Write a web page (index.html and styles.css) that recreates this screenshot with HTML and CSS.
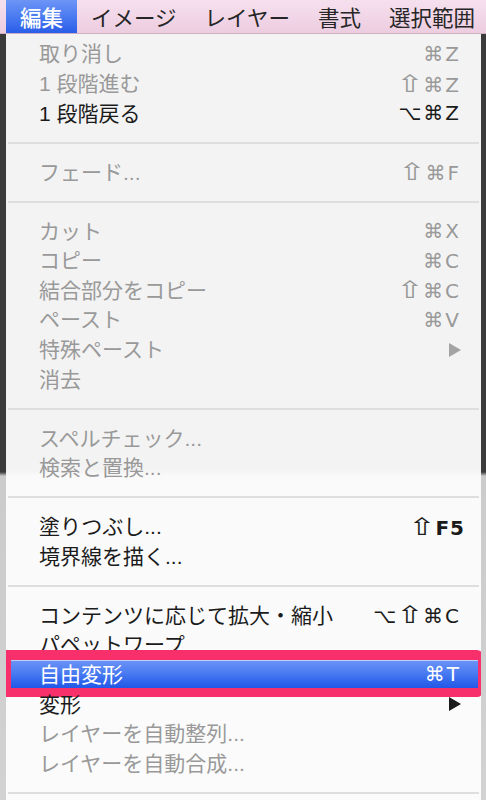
FILE: index.html
```html
<!DOCTYPE html>
<html lang="ja">
<head>
<meta charset="utf-8">
<title>編集メニュー</title>
<link rel="stylesheet" href="styles.css">
</head>
<body>
<div class="screen">
  <nav class="menubar">
    <span class="mb-item active">編集</span>
    <span class="mb-item">イメージ</span>
    <span class="mb-item">レイヤー</span>
    <span class="mb-item">書式</span>
    <span class="mb-item">選択範囲</span>
  </nav>
  <div class="menu">
    <div class="row dis"><span class="label">取り消し</span><span class="key">⌘Z</span></div>
    <div class="row dis"><span class="label">1 段階進む</span><span class="key"><span class="shift">⇧</span>⌘Z</span></div>
    <div class="row"><span class="label">1 段階戻る</span><span class="key">⌥⌘Z</span></div>
    <div class="sep"></div>
    <div class="row dis"><span class="label">フェード...</span><span class="key"><span class="shift">⇧</span>⌘F</span></div>
    <div class="sep"></div>
    <div class="row dis"><span class="label">カット</span><span class="key">⌘X</span></div>
    <div class="row dis"><span class="label">コピー</span><span class="key">⌘C</span></div>
    <div class="row dis"><span class="label">結合部分をコピー</span><span class="key"><span class="shift">⇧</span>⌘C</span></div>
    <div class="row dis"><span class="label">ペースト</span><span class="key">⌘V</span></div>
    <div class="row dis"><span class="label">特殊ペースト</span><svg class="arrow" viewBox="0 0 12 14" width="12" height="14"><path d="M0 0 L12 7 L0 14 Z"/></svg></div>
    <div class="row dis"><span class="label">消去</span></div>
    <div class="sep"></div>
    <div class="row dis"><span class="label">スペルチェック...</span></div>
    <div class="row dis"><span class="label">検索と置換...</span></div>
    <div class="sep"></div>
    <div class="row"><span class="label">塗りつぶし...</span><span class="key bold shift-f5"><span class="shift">⇧</span>F5</span></div>
    <div class="row"><span class="label">境界線を描く...</span></div>
    <div class="sep"></div>
    <div class="row"><span class="label">コンテンツに応じて拡大・縮小</span><span class="key">⌥<span class="shift">⇧</span>⌘C</span></div>
    <div class="row"><span class="label">パペットワープ</span></div>
    <div class="row selected"><span class="label">自由変形</span><span class="key">⌘T</span></div>
    <div class="row"><span class="label">変形</span><svg class="arrow" viewBox="0 0 12 14" width="12" height="14"><path d="M0 0 L12 7 L0 14 Z"/></svg></div>
    <div class="row dis"><span class="label">レイヤーを自動整列...</span></div>
    <div class="row dis"><span class="label">レイヤーを自動合成...</span></div>
    <div class="sep"></div>
  </div>
</div>
</body>
</html>
```
FILE: styles.css
```css
* {
  box-sizing: border-box;
  margin: 0;
  padding: 0;
}

html, body {
  width: 486px;
  height: 800px;
  overflow: hidden;
}

body {
  background: linear-gradient(to bottom, #3b3b3b 0, #3b3b3b 472px, #cbcbcb 476px, #d2d2d2 800px);
  font-family: "Liberation Sans", "Noto Sans CJK JP", sans-serif;
}

.screen {
  width: 486px;
  height: 800px;
  display: flex;
  flex-direction: column;
}

.menubar {
  height: 34px;
  flex: none;
  display: flex;
  padding-left: 6px;
  overflow: hidden;
  background: linear-gradient(to bottom, #f6e0ee, #eccde0);
  border-bottom: 1px solid #cfb0c3;
}

.mb-item {
  flex: none;
  white-space: nowrap;
  padding: 0 14px;
  font-family: "Noto Sans CJK JP", sans-serif;
  font-size: 21.5px;
  line-height: 33px;
  color: #262626;
}

.mb-item.active {
  color: #fff;
  font-weight: 500;
  background: linear-gradient(to bottom, #6d95f6 0, #4a7bf1 50%, #2a5de8 100%);
}

.menu {
  flex: 1;
  margin: 0 5px 0 6px;
  padding-top: 5.2px;
  background: linear-gradient(to bottom, #f3f3f3 0, #f3f3f3 436px, #fafafa 442px, #fbfbfb 100%);
  overflow: hidden;
}

.row {
  position: relative;
  height: 29.6px;
  display: flex;
  align-items: center;
  justify-content: space-between;
  padding: 0 22px 0 33px;
  color: #1b1b1b;
}

.row.dis {
  color: #999999;
}

.label {
  font-size: 21px;
  line-height: 1;
  white-space: nowrap;
}

.key {
  font-family: "DejaVu Sans", sans-serif;
  font-size: 20px;
  line-height: 1;
  letter-spacing: 2px;
  margin-right: -2px;
  white-space: nowrap;
}

.shift {
  display: inline-block;
  font-size: 24px;
  font-weight: normal;
  transform: scaleX(1.35);
  margin: 0 3px 0 2px;
  letter-spacing: 0;
}

.key.bold {
  font-weight: bold;
  letter-spacing: 1px;
}

.shift-f5 {
  margin-right: -6px;
}

.arrow {
  flex: none;
  fill: currentColor;
  margin-right: -2px;
}

.row.dis .arrow {
  fill: #a3a3a3;
}

.row.selected {
  color: #fff;
  background: linear-gradient(to bottom, #6c94f6 0, #4a7bf2 45%, #3066ec 75%, #2155e6 100%);
  box-shadow: inset 0 1px 0 rgba(255, 255, 255, 0.55);
}

.row.selected::after {
  content: "";
  position: absolute;
  top: -10px;
  bottom: -8px;
  left: -5px;
  right: -2px;
  border-style: solid;
  border-color: #f72f6b;
  border-width: 10px 5px 9px 10px;
  border-radius: 6px;
}

.sep {
  height: 29.4px;
  display: flex;
  align-items: center;
  padding: 0 2px;
}

.sep::before {
  content: "";
  display: block;
  width: 100%;
  height: 2px;
  background: #dedede;
}
```
